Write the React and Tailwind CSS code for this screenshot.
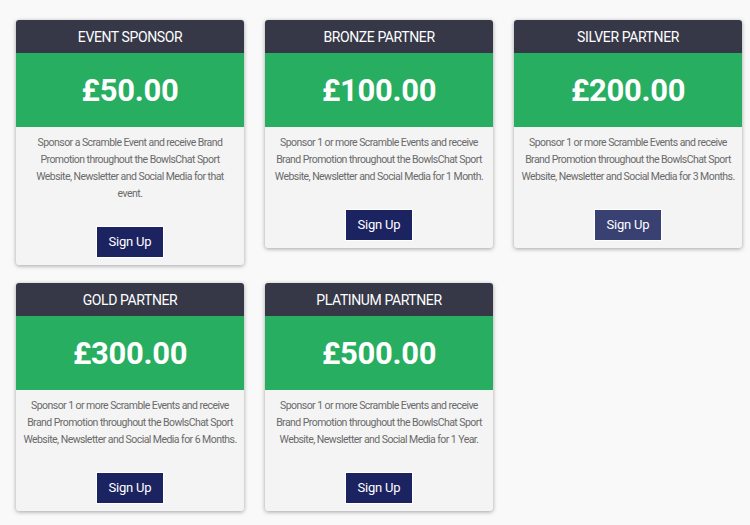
import React from "react";

const plans = [
  {
    title: "EVENT SPONSOR",
    price: "£50.00",
    text: "Sponsor a Scramble Event and receive Brand Promotion throughout the BowlsChat Sport Website, Newsletter and Social Media for that event.",
  },
  {
    title: "BRONZE PARTNER",
    price: "£100.00",
    text: "Sponsor 1 or more Scramble Events and receive Brand Promotion throughout the BowlsChat Sport Website, Newsletter and Social Media for 1 Month.",
  },
  {
    title: "SILVER PARTNER",
    price: "£200.00",
    text: "Sponsor 1 or more Scramble Events and receive Brand Promotion throughout the BowlsChat Sport Website, Newsletter and Social Media for 3 Months.",
    hover: true,
  },
  {
    title: "GOLD PARTNER",
    price: "£300.00",
    text: "Sponsor 1 or more Scramble Events and receive Brand Promotion throughout the BowlsChat Sport Website, Newsletter and Social Media for 6 Months.",
  },
  {
    title: "PLATINUM PARTNER",
    price: "£500.00",
    text: "Sponsor 1 or more Scramble Events and receive Brand Promotion throughout the BowlsChat Sport Website, Newsletter and Social Media for 1 Year.",
  },
];

const PlanCard = ({ title, price, text, hover }) => (
  <div className="w-[228px] bg-[#f4f4f4] rounded-[3px] shadow-[0_1px_4px_rgba(0,0,0,0.35)] overflow-hidden flex flex-col items-center">
    <div className="w-full h-[33px] pt-[2px] bg-[#363848] text-white text-[14px] flex items-center justify-center tracking-[-0.4px]">
      {title}
    </div>
    <div className="w-full h-[74px] pt-[3px] bg-[#27ae60] text-white text-[31px] font-bold flex items-center justify-center tracking-[-0.3px]">
      {price}
    </div>
    <p className="pt-[7px] px-[7px] text-center text-[10.5px] tracking-[-0.55px] leading-[17px] text-[#6a6a6a]">
      {text}
    </p>
    <button
      className={`mt-[24px] mb-[7px] w-[68px] h-[32px] text-white text-[13px] tracking-[-0.2px] border border-white ${
        hover ? "bg-[#394173]" : "bg-[#1c2361]"
      }`}
    >
      Sign Up
    </button>
  </div>
);

export default function App() {
  return (
    <div
      className="min-h-screen bg-[#f9f9f9] pl-[16px] pt-[20px]"
      style={{ fontFamily: "'Roboto', 'Liberation Sans', sans-serif" }}
    >
      <div className="flex flex-wrap items-start gap-x-[21px] gap-y-[18px] w-[730px]">
        {plans.map((p) => (
          <PlanCard key={p.title} {...p} />
        ))}
      </div>
    </div>
  );
}
